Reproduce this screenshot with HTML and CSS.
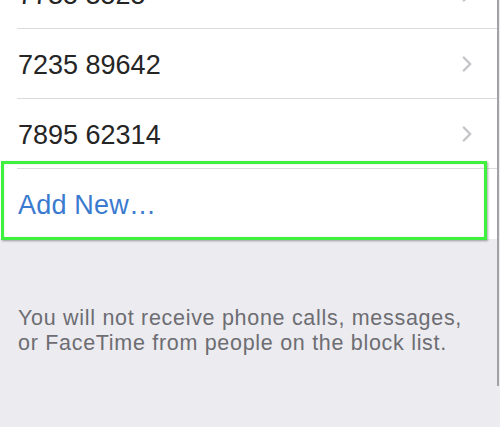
FILE: index.html
```html
<!DOCTYPE html>
<html lang="en">

<head>
    <meta charset="UTF-8" />
    <meta name="viewport" content="width=device-width, initial-scale=1.0" />
    <title>Blocked</title>
    <link rel="stylesheet" href="styles.css">
</head>

<body>
    <div class="screen">
        <div class="list">
            <div class="row">
                <div class="cell">
                    <span class="number">7735 3525</span>
                    <svg class="chevron" width="10" height="16" viewBox="0 0 10 16"><path d="M1.8 1.5 L8.2 8 L1.8 14.5" /></svg>
                </div>
            </div>
            <div class="row">
                <div class="cell">
                    <span class="number">7235 89642</span>
                    <svg class="chevron" width="10" height="16" viewBox="0 0 10 16"><path d="M1.8 1.5 L8.2 8 L1.8 14.5" /></svg>
                </div>
            </div>
            <div class="row">
                <div class="cell">
                    <span class="number">7895 62314</span>
                    <svg class="chevron" width="10" height="16" viewBox="0 0 10 16"><path d="M1.8 1.5 L8.2 8 L1.8 14.5" /></svg>
                </div>
            </div>
            <div class="row add-row">
                <div class="cell">
                    <span class="add-new">Add New…</span>
                </div>
                <div class="highlight"></div>
            </div>
        </div>

        <p class="footer-note">You will not receive phone calls, messages,<br>or FaceTime from people on the block list.</p>
    </div>
</body>

</html>
```

FILE: styles.css
```css
html {
    background: #ebebf0;
}

body {
    margin: 0;
    font-family: "Liberation Sans", Arial, sans-serif;
    overflow: hidden;
}

.screen {
    width: 497px;
    height: 427px;
    border-right: 2px solid #a2a2a6;
    background: #ebebf0;
}

.list {
    margin-top: -41px;
    background: #ffffff;
}

.row {
    position: relative;
    padding-left: 17px;
}

.cell {
    display: flex;
    align-items: center;
    justify-content: space-between;
    height: 70px;
    box-sizing: border-box;
    padding-left: 1px;
    padding-right: 25px;
    border-bottom: 1px solid #dcdce0;
}

.add-row .cell {
    border-bottom: none;
}

.number {
    font-size: 27px;
    color: #252525;
    padding-top: 3px;
}

.add-new {
    font-size: 27px;
    color: #3a7bcf;
    padding-top: 3px;
    letter-spacing: 0.2px;
}

.chevron path {
    fill: none;
    stroke: #c4c4c8;
    stroke-width: 2.4;
    stroke-linecap: round;
    stroke-linejoin: round;
}

/* green annotation frame over the last row */
.highlight {
    position: absolute;
    top: -8px;
    left: 1px;
    right: 10px;
    bottom: -1px;
    border: 3px solid #3ff03f;
    box-shadow: 1px 1px 2px rgba(0, 0, 0, 0.35), inset 0 0 1px rgba(0, 120, 0, 0.4);
}

.footer-note {
    margin: 0;
    padding: 67px 0 0 18px;
    font-size: 21.5px;
    line-height: 25px;
    letter-spacing: 0.7px;
    color: #6d6d72;
}
```
